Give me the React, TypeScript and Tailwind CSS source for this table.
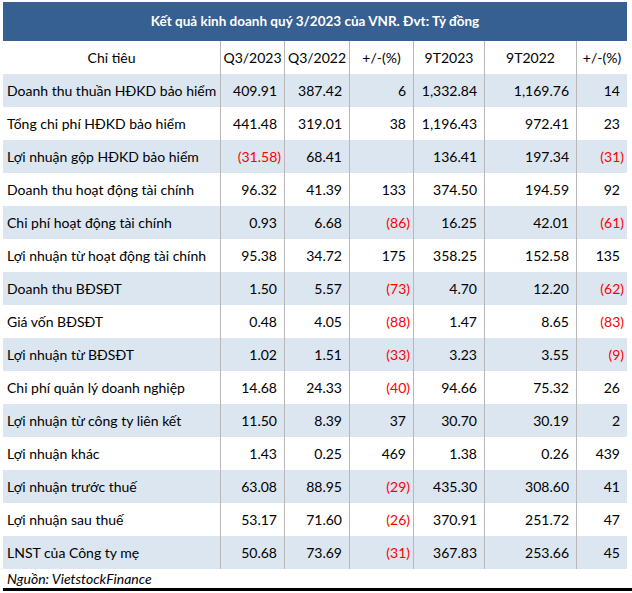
import React from "react";

type Row = { label: string; v: string[] };

const rows: Row[] = [
  { label: "Doanh thu thuần HĐKD bảo hiểm", v: ["409.91", "387.42", "6", "1,332.84", "1,169.76", "14"] },
  { label: "Tổng chi phí HĐKD bảo hiểm", v: ["441.48", "319.01", "38", "1,196.43", "972.41", "23"] },
  { label: "Lợi nhuận gộp HĐKD bảo hiểm", v: ["(31.58)", "68.41", "", "136.41", "197.34", "(31)"] },
  { label: "Doanh thu hoạt động tài chính", v: ["96.32", "41.39", "133", "374.50", "194.59", "92"] },
  { label: "Chi phí hoạt động tài chính", v: ["0.93", "6.68", "(86)", "16.25", "42.01", "(61)"] },
  { label: "Lợi nhuận từ hoạt động tài chính", v: ["95.38", "34.72", "175", "358.25", "152.58", "135"] },
  { label: "Doanh thu BĐSĐT", v: ["1.50", "5.57", "(73)", "4.70", "12.20", "(62)"] },
  { label: "Giá vốn BĐSĐT", v: ["0.48", "4.05", "(88)", "1.47", "8.65", "(83)"] },
  { label: "Lợi nhuận từ BĐSĐT", v: ["1.02", "1.51", "(33)", "3.23", "3.55", "(9)"] },
  { label: "Chi phí quản lý doanh nghiệp", v: ["14.68", "24.33", "(40)", "94.66", "75.32", "26"] },
  { label: "Lợi nhuận từ công ty liên kết", v: ["11.50", "8.39", "37", "30.70", "30.19", "2"] },
  { label: "Lợi nhuận khác", v: ["1.43", "0.25", "469", "1.38", "0.26", "439"] },
  { label: "Lợi nhuận trước thuế", v: ["63.08", "88.95", "(29)", "435.30", "308.60", "41"] },
  { label: "Lợi nhuận sau thuế", v: ["53.17", "71.60", "(26)", "370.91", "251.72", "47"] },
  { label: "LNST của Công ty mẹ", v: ["50.68", "73.69", "(31)", "367.83", "253.66", "45"] },
];

const cols = ["Q3/2023", "Q3/2022", "+/-(%)", "9T2023", "9T2022", "+/-(%)"];
const widths = ["w-[64px]", "w-[65px]", "w-[64px]", "w-[71px]", "w-[92px]", "w-[51px]"];

export default function App() {
  return (
    <div className="w-[632px] h-[593px] bg-white pt-[2px] text-black text-[14px]" style={{ fontFamily: "Lato, 'Open Sans', sans-serif" }}>
      <div className="ml-[3px] w-[624px]">
        <div className="h-[39px] bg-[#366092] text-white font-bold text-[13.5px] flex items-center justify-center">
          Kết quả kinh doanh quý 3/2023 của VNR. Đvt: Tỷ đồng
        </div>
        <div className="flex h-[33px]">
          <div className="w-[217px] flex items-center justify-center">Chỉ tiêu</div>
          {cols.map((c, i) => (
            <div key={i} className={`${widths[i]} border-l border-[#b8b8b8] flex items-center justify-center`}>
              {c}
            </div>
          ))}
        </div>
        {rows.map((r, ri) => (
          <div key={ri} className={`flex h-[33px] ${ri % 2 === 0 ? "bg-[#dce6f1]" : "bg-white"}`}>
            <div className="w-[217px] flex items-center pl-[4px] whitespace-nowrap">{r.label}</div>
            {r.v.map((v, i) => {
              const neg = v.startsWith("(");
              return (
                <div
                  key={i}
                  className={`${widths[i]} border-l border-[#b8b8b8] flex items-center justify-end ${neg ? "pr-[3px] text-[#ff0000]" : "pr-[7px]"}`}
                >
                  {v}
                </div>
              );
            })}
          </div>
        ))}
        <div className="h-[19px] flex items-center pl-[4px] italic">Nguồn: VietstockFinance</div>
      </div>
      <div className="ml-[3px] h-[3px] bg-black" />
    </div>
  );
}
